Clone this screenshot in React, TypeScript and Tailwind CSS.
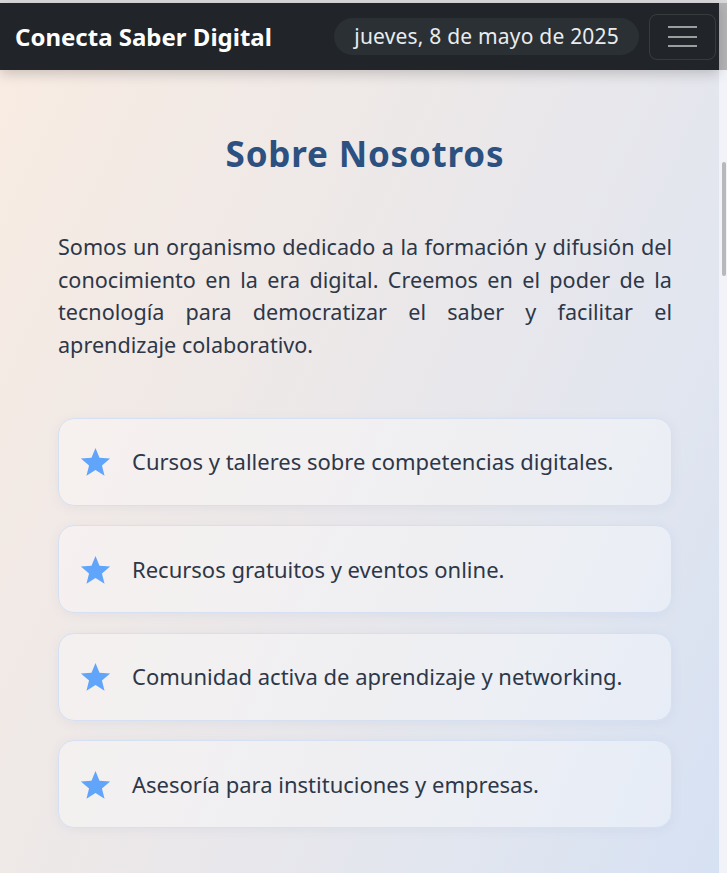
const features = [
  'Cursos y talleres sobre competencias digitales.',
  'Recursos gratuitos y eventos online.',
  'Comunidad activa de aprendizaje y networking.',
  'Asesoría para instituciones y empresas.',
];

function Star() {
  return (
    <svg viewBox="0 0 24 24" className="h-[31px] w-[31px] shrink-0 fill-[#60a5fa]">
      <path d="M12 1.5l3.1 7.6 8.2.6-6.3 5.3 2 8-7-4.4-7 4.4 2-8L.7 9.7l8.2-.6z" />
    </svg>
  );
}

export default function App() {
  return (
    <div className="flex h-[873px] flex-col overflow-hidden bg-[#d9d9db] pt-[3px] font-['Noto_Sans',sans-serif]">
      <div className="flex min-h-0 flex-1">
        <div className="flex min-w-0 flex-1 flex-col bg-[linear-gradient(115deg,#f9ece2_0%,#ece8e9_45%,#e2e6ef_75%,#d6e1f3_100%)]">
          {/* Navbar */}
          <nav className="relative z-10 flex h-[67px] shrink-0 items-center justify-between bg-[#212529] pl-[15px] pr-[3px] shadow-[0_4px_12px_rgba(0,0,0,0.18)]">
            <span className="text-[24px] font-bold text-white">Conecta Saber Digital</span>
            <div className="flex items-center gap-[10px]">
              <span className="flex h-[37px] items-center rounded-full bg-[#2b3035] px-[20px] text-[21px] tracking-[0.2px] text-[#e9ecef]">
                jueves, 8 de mayo de 2025
              </span>
              <button className="flex h-[46px] w-[67px] flex-col items-center justify-center gap-[7.5px] rounded-lg border border-white/10">
                <span className="h-[2px] w-[29px] bg-white/55" />
                <span className="h-[2px] w-[29px] bg-white/55" />
                <span className="h-[2px] w-[29px] bg-white/55" />
              </button>
            </div>
          </nav>

          {/* Sobre Nosotros */}
          <section className="pl-[58px] pr-[47px] pt-[58px]">
            <h2 className="text-center text-[35px] leading-[52px] font-bold tracking-[0.8px] text-[#2c5080]">
              Sobre Nosotros
            </h2>
            <p className="mt-[51px] text-justify text-[21.6px] leading-[32.7px] text-[#2d3748]">
              Somos un organismo dedicado a la formación y difusión del conocimiento en la era digital. Creemos en el
              poder de la tecnología para democratizar el saber y facilitar el aprendizaje colaborativo.
            </p>
            <ul className="mt-[56px] flex flex-col gap-[19.5px]">
              {features.map((item) => (
                <li
                  key={item}
                  className="flex h-[88px] items-center gap-[21px] rounded-2xl border border-[#d5e0f3] bg-white/35 px-[21px] text-[22px] text-[#2d3748] shadow-[0_2px_12px_rgba(90,110,160,0.07)]">
                  <Star />
                  <span>{item}</span>
                </li>
              ))}
            </ul>
          </section>
        </div>

        {/* Scrollbar */}
        <div className="flex w-2 shrink-0 flex-col bg-[#f1f3f8]">
          <div className="h-[67px] bg-[#b4b4b6]" />
          <div className="ml-[3px] mt-[92px] h-[114px] w-[4px] rounded-sm bg-[#b8b8bc]" />
        </div>
      </div>
    </div>
  );
}
